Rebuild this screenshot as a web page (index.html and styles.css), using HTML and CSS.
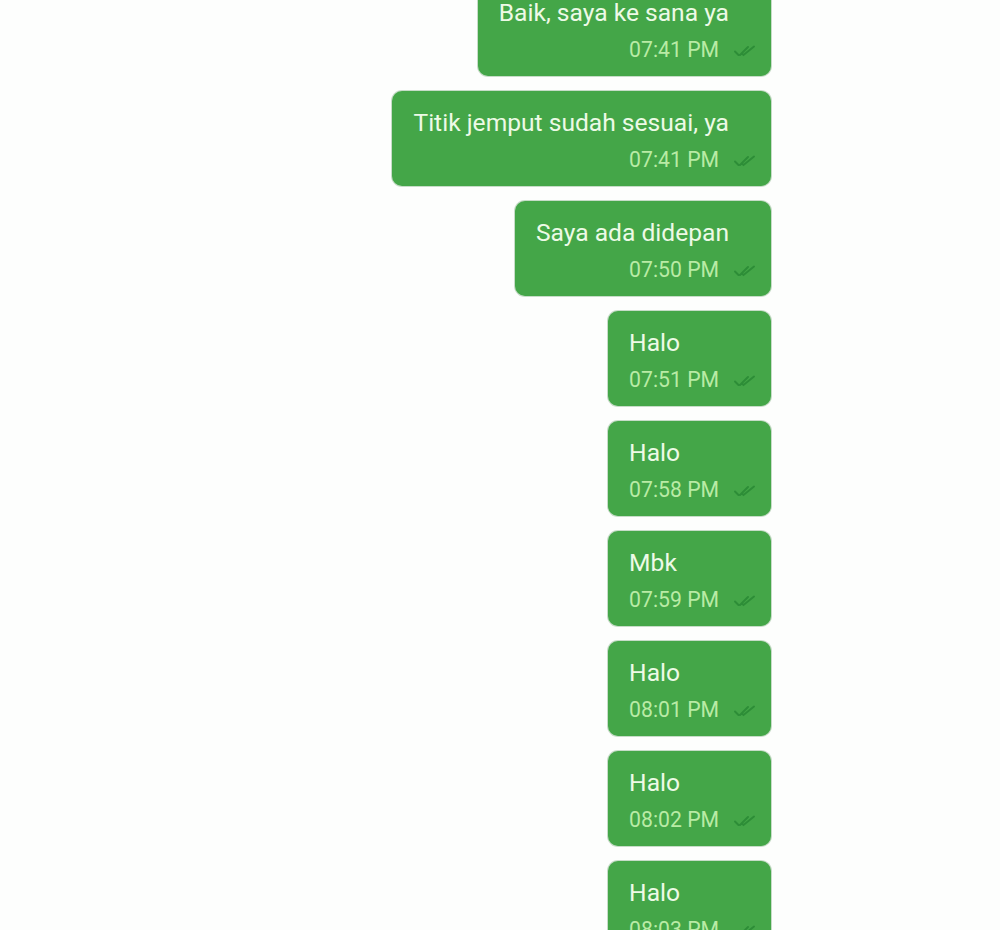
FILE: index.html
```html
<!DOCTYPE html>
<html lang="id">
<head>
    <meta charset="UTF-8">
    <meta name="viewport" content="width=device-width, initial-scale=1.0">
    <title>Chat</title>
    <link rel="stylesheet" href="styles.css">
</head>
<body>

<div class="chat">
    <div class="bubble">
        <p class="text">Baik, saya ke sana ya</p>
        <div class="meta"><span class="time">07:41 PM</span><svg class="check" viewBox="0 0 22 12"><path d="M1 6.5l3.5 3.5M6 10L14 2M8 8.5l1.5 1.5L20 1.5"/></svg></div>
    </div>
    <div class="bubble">
        <p class="text">Titik jemput sudah sesuai, ya</p>
        <div class="meta"><span class="time">07:41 PM</span><svg class="check" viewBox="0 0 22 12"><path d="M1 6.5l3.5 3.5M6 10L14 2M8 8.5l1.5 1.5L20 1.5"/></svg></div>
    </div>
    <div class="bubble">
        <p class="text">Saya ada didepan</p>
        <div class="meta"><span class="time">07:50 PM</span><svg class="check" viewBox="0 0 22 12"><path d="M1 6.5l3.5 3.5M6 10L14 2M8 8.5l1.5 1.5L20 1.5"/></svg></div>
    </div>
    <div class="bubble">
        <p class="text">Halo</p>
        <div class="meta"><span class="time">07:51 PM</span><svg class="check" viewBox="0 0 22 12"><path d="M1 6.5l3.5 3.5M6 10L14 2M8 8.5l1.5 1.5L20 1.5"/></svg></div>
    </div>
    <div class="bubble">
        <p class="text">Halo</p>
        <div class="meta"><span class="time">07:58 PM</span><svg class="check" viewBox="0 0 22 12"><path d="M1 6.5l3.5 3.5M6 10L14 2M8 8.5l1.5 1.5L20 1.5"/></svg></div>
    </div>
    <div class="bubble">
        <p class="text">Mbk</p>
        <div class="meta"><span class="time">07:59 PM</span><svg class="check" viewBox="0 0 22 12"><path d="M1 6.5l3.5 3.5M6 10L14 2M8 8.5l1.5 1.5L20 1.5"/></svg></div>
    </div>
    <div class="bubble">
        <p class="text">Halo</p>
        <div class="meta"><span class="time">08:01 PM</span><svg class="check" viewBox="0 0 22 12"><path d="M1 6.5l3.5 3.5M6 10L14 2M8 8.5l1.5 1.5L20 1.5"/></svg></div>
    </div>
    <div class="bubble">
        <p class="text">Halo</p>
        <div class="meta"><span class="time">08:02 PM</span><svg class="check" viewBox="0 0 22 12"><path d="M1 6.5l3.5 3.5M6 10L14 2M8 8.5l1.5 1.5L20 1.5"/></svg></div>
    </div>
    <div class="bubble">
        <p class="text">Halo</p>
        <div class="meta"><span class="time">08:03 PM</span><svg class="check" viewBox="0 0 22 12"><path d="M1 6.5l3.5 3.5M6 10L14 2M8 8.5l1.5 1.5L20 1.5"/></svg></div>
    </div>
</div>

</body>
</html>
```

FILE: styles.css
```css
html, body {
    margin: 0;
    height: 100%;
    overflow: hidden;
}

body {
    font-family: Roboto, "Noto Sans", sans-serif;
    background-color: #fdfefd;
}

.chat {
    display: flex;
    flex-direction: column;
    align-items: flex-end;
    gap: 15px;
    margin-top: -19px;
    padding-right: 229px;
}

.bubble {
    box-sizing: border-box;
    height: 95px;
    padding: 17px 15px 0 21px;
    background-color: #44a648;
    border-radius: 10px;
    box-shadow: 0 0 0 1px rgba(40, 120, 45, 0.25);
}

.text {
    margin: 0;
    padding-right: 27px;
    font-size: 24.6px;
    line-height: 30px;
    color: #edfae6;
    white-space: nowrap;
}

.meta {
    display: flex;
    justify-content: flex-end;
    align-items: center;
    margin-top: 8px;
    height: 26px;
}

.time {
    font-size: 21.2px;
    color: #b9eba5;
}

.check {
    width: 22px;
    height: 12px;
    margin-left: 15px;
    margin-top: 3px;
    fill: none;
    stroke: #2d8d37;
    stroke-width: 1.9;
    stroke-linecap: round;
}
```
